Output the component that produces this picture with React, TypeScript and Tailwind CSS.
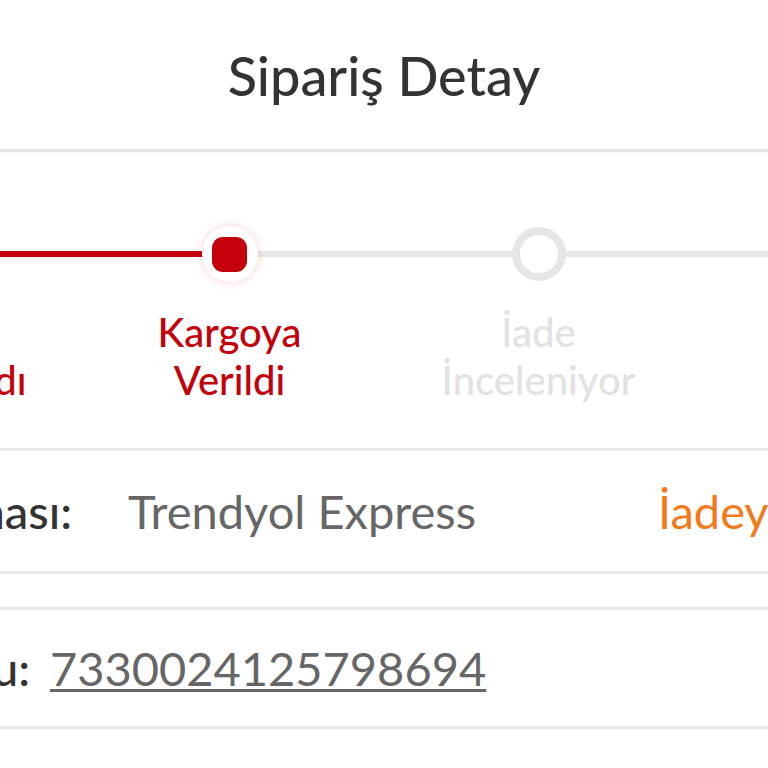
import React from 'react';

type StepStatus = 'done' | 'current' | 'pending';

interface Step {
  lines: string[];
  status: StepStatus;
}

const STEPS: Step[] = [
  { lines: ['İade', 'Talebi Alındı'], status: 'done' },
  { lines: ['Kargoya', 'Verildi'], status: 'current' },
  { lines: ['İade', 'İnceleniyor'], status: 'pending' },
  { lines: ['İade', 'Edildi'], status: 'pending' },
];

const StepDot = ({ status }: { status: StepStatus }) => {
  if (status === 'pending') {
    return <div className="w-[54px] h-[54px] rounded-full border-[8px] border-[#e6e6e6] bg-white" />;
  }
  return (
    <div className="w-[56px] h-[56px] rounded-full bg-white flex items-center justify-center shadow-[0_0_8px_2px_rgba(200,10,10,0.12)]">
      <div className="w-[35px] h-[35px] rounded-[11px] bg-[#c4000b]" />
    </div>
  );
};

const StepItem = ({ step, index }: { step: Step; index: number }) => {
  const leftRed = step.status !== 'pending';
  const nextStatus = STEPS[index + 1]?.status;
  const rightRed = nextStatus === 'done' || nextStatus === 'current';
  const isActive = step.status !== 'pending';

  return (
    <div className="w-[309px] shrink-0 flex flex-col items-center">
      <div className="relative w-full h-[56px] flex items-center justify-center">
        <div className={`absolute left-0 w-1/2 top-[25px] h-[6px] ${index === 0 ? 'hidden' : ''} ${leftRed ? 'bg-[#c4000b]' : 'bg-[#e8e8e8]'}`} />
        <div className={`absolute right-0 w-1/2 top-[25px] h-[6px] ${index === STEPS.length - 1 ? 'hidden' : ''} ${rightRed ? 'bg-[#c4000b]' : 'bg-[#e8e8e8]'}`} />
        <div className="relative">
          <StepDot status={step.status} />
        </div>
      </div>
      <div className={`mt-[26px] text-center text-[40px] leading-[48px] font-medium ${isActive ? 'text-[#c4000b]' : 'text-[#e2e2e2]'}`}>
        {step.lines.map(l => (
          <div key={l} className="whitespace-nowrap">{l}</div>
        ))}
      </div>
    </div>
  );
};

export default function App() {
  return (
    <div className="w-[768px] h-[768px] overflow-hidden bg-white font-['Lato','Liberation_Sans',sans-serif]">
      {/* Header */}
      <div className="h-[152px] flex items-center justify-center border-b-[3px] border-[#e6e6e6] shadow-[0_2px_4px_rgba(0,0,0,0.03)] pt-[2px]">
        <h1 className="text-[54px] font-medium text-[#333333] leading-none">Sipariş Detay</h1>
      </div>

      {/* Stepper */}
      <div className="overflow-hidden border-b-[3px] border-[#e8e8e8] pt-[74px] pb-[44px]">
        <div className="flex -ml-[234px]">
          {STEPS.map((s, i) => (
            <StepItem key={i} step={s} index={i} />
          ))}
        </div>
      </div>

      {/* Cargo company */}
      <div className="h-[123px] flex items-center border-b-[3px] border-[#e8e8e8] text-[47px] whitespace-nowrap">
        <span className="shrink-0 w-[340px] -ml-[268px] text-right text-[#333333] font-medium">Kargo Firması:</span>
        <span className="shrink-0 w-[586px] pl-[56px] text-[#666666]">Trendyol Express</span>
        <span className="shrink-0 text-[#f27a1a]">İadeyi Takip Et</span>
      </div>

      <div className="h-[33px]" />

      {/* Cargo code */}
      <div className="h-[122px] flex items-center border-y-[3px] border-[#e8e8e8] text-[47px] whitespace-nowrap">
        <span className="shrink-0 w-[300px] -ml-[270px] text-right text-[#333333] font-medium">Kargo Kodu:</span>
        <span className="shrink-0 pl-[20px] text-[#666666] underline decoration-[3px] underline-offset-[3px]">7330024125798694</span>
      </div>
    </div>
  );
}
